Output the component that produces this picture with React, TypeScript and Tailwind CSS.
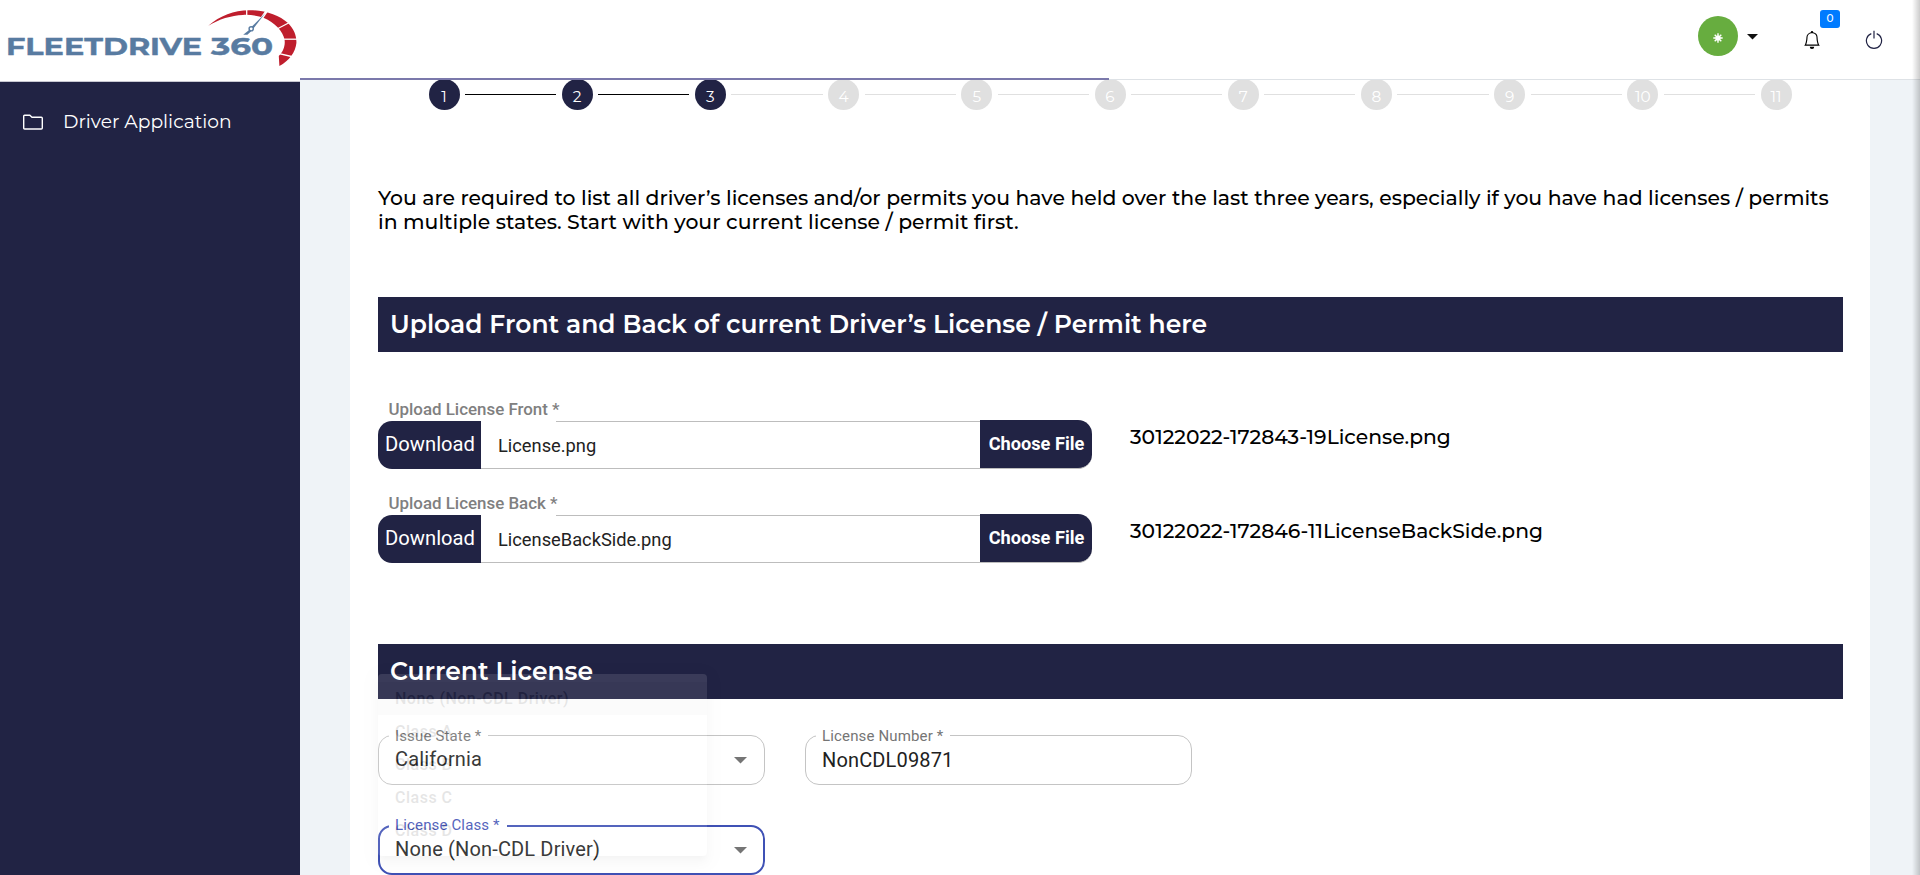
import React from "react";
import { BsBell } from "react-icons/bs";

const STEPS = Array.from({ length: 11 }, (_, i) => i + 1);
const CURRENT_STEP = 3;

function Logo() {
  return (
    <svg width="300" height="81" viewBox="0 0 300 81" className="block">
      <g
        fill="#587ba1"
        stroke="#587ba1"
        strokeWidth="0.4"
        fontFamily="Montserrat, Inter, sans-serif"
        fontWeight="700"
        fontSize="24"
      >
        <text x="6" y="55" textLength="196" lengthAdjust="spacingAndGlyphs">
          FLEETDRIVE
        </text>
        <text x="211" y="55" textLength="62" lengthAdjust="spacingAndGlyphs">
          360
        </text>
      </g>
      <path
        d="M208.3 25.8C220 15.5 234 10.3 249 10.2C264 10 279 15 288 23C294 29 296.7 36 296.4 43C295.6 52 289 61 279.4 66L278.8 56C283 52 285.4 46 284.6 40C283.4 31 274 22.500 264 18C258 15.400 250 14.600 243 14.900C231 15.400 219 19 208.300 25.800Z"
        fill="#bf1e2d"
      />
      <g stroke="#fff" strokeWidth="1.300">
        <path d="M246.700 9V18" />
        <path d="M267 10.500L260.500 20" strokeWidth="2.600" />
        <path d="M289.500 22.500L276 29.500" />
        <path d="M297.500 39.200H281" />
        <path d="M291.500 56.500L276 52.800" />
      </g>
      <path d="M265.200 13.200L253.200 28.800L251.200 27.200Z" fill="#587ba1" />
      <path d="M249.400 29.800L243.200 34.800H247.400L251.200 31.200Z" fill="#587ba1" />
      <circle cx="251.200" cy="28.800" r="2.100" fill="#fff" stroke="#587ba1" strokeWidth="1.400" />
    </svg>
  );
}

function Sidebar() {
  return (
    <aside className="flex w-[300px] shrink-0 flex-col">
      <div className="h-[82px] border-b border-[#c8c8d2] bg-white">
        <Logo />
      </div>
      <nav className="flex-1 bg-[#212344] pt-7">
        <a className="flex h-6 items-center pl-[22px] text-[18.7px] text-white">
          <svg width="22" height="18" viewBox="0 0 22 18" fill="none" stroke="#fff" strokeWidth="1.400">
            <path d="M2.500 2.200H7.800L10 4.200H19.300Q20.300 4.200 20.300 5.200V15Q20.300 16 19.300 16H2.700Q1.700 16 1.700 15V3Q1.700 2.200 2.500 2.200Z" />
          </svg>
          <span className="ml-[19px]">Driver Application</span>
        </a>
      </nav>
    </aside>
  );
}

function Header() {
  return (
    <header className="relative flex h-20 shrink-0 border-b border-[#dee2e6] bg-white pl-[1398px]">
      <div className="mt-4 flex h-10 w-10 items-center justify-center rounded-full bg-[#67ad3f]">
        <svg width="10" height="10" viewBox="-5 -5 10 10" stroke="#fff" strokeWidth="1.400" className="mt-[3px]">
          <path d="M0 -4.700V4.700M-4.700 0H4.700M-3.300 -3.300L3.300 3.300M-3.300 3.300L3.300 -3.300" />
          <circle r="2.600" fill="#fff" stroke="none" />
        </svg>
      </div>
      <svg width="11" height="6" viewBox="0 0 11 6" className="mt-[34px] ml-[9px]">
        <path d="M0 0H11L5.500 5.500Z" fill="#111" />
      </svg>
      <div className="relative mt-[31px] ml-[45px] h-[18px] w-[18px] text-black">
        <BsBell size={18} />
        <span className="absolute -top-[21px] left-[17px] flex h-[18px] w-5 items-center justify-center rounded-[3px] bg-[#007bff] text-[10.5px] font-medium text-white">
          0
        </span>
      </div>
      <svg width="18" height="20" viewBox="0 0 18 20" fill="none" stroke="#212344" strokeWidth="1.200" className="mt-[30px] ml-[44px]">
        <path d="M6.300 3.600A7.600 7.600 0 1 0 11.700 3.600M9 0.800V8.500" />
      </svg>
      <div className="absolute -bottom-px left-0 h-0.5 w-[809px] bg-[#7b79ab]" />
    </header>
  );
}

function Stepper() {
  return (
    <ol className="-mt-px ml-[50.5px] flex w-[1363px] items-center">
      {STEPS.map((n) => (
        <React.Fragment key={n}>
          {n > 1 && (
            <li className={n <= CURRENT_STEP ? "mx-[5.5px] h-px flex-1 bg-black" : "mx-[5.5px] h-px flex-1 bg-[#e0e0e0]"} />
          )}
          <li
            className={
              "flex h-[31px] w-[31px] shrink-0 items-center justify-center rounded-full pt-1.5 text-[15.3px] text-white " +
              (n <= CURRENT_STEP ? "bg-[#212344]" : "bg-[#e0e0e0]")
            }
          >
            {n}
          </li>
        </React.Fragment>
      ))}
    </ol>
  );
}

function SectionTitle({ children }: { children: React.ReactNode }) {
  return (
    <h2 className="flex h-[55px] shrink-0 items-center bg-[#212344] pl-3 text-[25px] font-semibold text-white">
      {children}
    </h2>
  );
}

function UploadRow({ label, file, stored }: { label: string; file: string; stored: string }) {
  return (
    <div className="flex h-[94px]">
      <div className="w-[714px] font-['Roboto',sans-serif]">
        <div className="relative z-10 flex h-[22px] w-fit items-center bg-white pl-[10.5px] text-[16.9px] font-medium text-[#808080]">
          {label}
        </div>
        <div className="flex h-12">
          <div className="flex w-[103px] items-center justify-center rounded-l-[14px] bg-[#212344] pb-0.5 pl-px text-[20.2px] text-white">
            Download
          </div>
          <div className="flex flex-1 items-center border-b border-[#bdbdbd] pl-[17px] text-[18.3px] text-[#222]">
            <span className="relative top-px">{file}</span>
          </div>
          <div className="-mt-px flex w-[112px] items-center justify-center rounded-r-[14px] border-b border-[#bdbdbd] bg-[#212344] pb-px pl-px text-[18.2px] font-bold text-white">
            Choose File
          </div>
        </div>
        <div className="relative -top-12 ml-[178px] h-px w-[424px] bg-[#bdbdbd]" />
      </div>
      <p className="mt-[22px] ml-[38px] text-[20.3px] leading-8 font-medium text-black">{stored}</p>
    </div>
  );
}

function OutlinedField({
  label,
  value,
  select = false,
  focused = false,
}: {
  label: string;
  value: string;
  select?: boolean;
  focused?: boolean;
}) {
  return (
    <div
      className={
        "relative flex h-[50px] w-[387px] items-center justify-between rounded-[14px] font-['Roboto',sans-serif] tracking-[0.00938em] " +
        (focused ? "border-2 border-[#3f51b5] pr-[16px] pl-[15px]" : "border border-[#c4c4c4] pr-[17px] pl-4")
      }
    >
      <span
        className={
          "absolute bg-white pr-[7px] pl-[6px] text-[15px] leading-5 " +
          (focused ? "-top-[12px] left-[9px] text-[#3f51b5]" : "-top-[10px] left-[10px] text-[#757575]")
        }
      >
        {label}
      </span>
      <span className={"text-[20px] leading-6 text-[#212121] " + (select ? "-mt-0.5" : "")}>{value}</span>
      {select && (
        <svg width="13" height="7" viewBox="0 0 13 7" className="relative">
          <path d="M0 0H13L6.500 6.500Z" fill="#757575" />
        </svg>
      )}
    </div>
  );
}

const CLASS_OPTIONS = ["None (Non-CDL Driver)", "Class A", "Class B", "Class C", "Class D"];

function FadingMenu() {
  return (
    <ul className="absolute top-[30px] left-0 z-20 w-[329px] rounded bg-white py-2 font-['Roboto',sans-serif] text-[16px] font-medium tracking-[0.5px] text-[#212121] opacity-[0.11] shadow-[0_5px_5px_-3px_rgba(0,0,0,0.2),0_8px_10px_1px_rgba(0,0,0,0.14),0_3px_14px_2px_rgba(0,0,0,0.12)]">
      {CLASS_OPTIONS.map((option, i) => (
        <li
          key={option}
          className={"flex h-[33.2px] items-center pl-[17px] " + (i === 0 ? "bg-[#e4e4e4]" : "")}
        >
          {option}
        </li>
      ))}
    </ul>
  );
}

export default function App() {
  return (
    <div className="relative flex h-[875px] w-full overflow-hidden bg-[#eff3f7] font-['Montserrat','Inter',sans-serif]">
      <Sidebar />
      <div className="flex min-w-0 flex-1 flex-col">
        <Header />
        <main className="ml-[50px] flex min-h-0 w-[1520px] flex-1 flex-col overflow-hidden bg-white pr-[27px] pl-7">
          <Stepper />
          <p className="mt-[76px] text-[20.4px] leading-6 font-medium text-black">
            You are required to list all driver’s licenses and/or permits you have held over the last three years,
            especially if you have had licenses / permits in multiple states. Start with your current license / permit
            first.
          </p>
          <div className="mt-[63px] flex flex-col">
            <SectionTitle>Upload Front and Back of current Driver’s License / Permit here</SectionTitle>
          </div>
          <div className="mt-[47px]">
            <UploadRow label="Upload License Front *" file="License.png" stored="30122022-172843-19License.png" />
            <UploadRow label="Upload License Back *" file="LicenseBackSide.png" stored="30122022-172846-11LicenseBackSide.png" />
          </div>
          <section className="relative mt-[57px] flex flex-col">
            <SectionTitle>Current License</SectionTitle>
            <div className="mt-9 flex gap-10">
              <OutlinedField label="Issue State *" value="California" select />
              <OutlinedField label="License Number *" value="NonCDL09871" />
            </div>
            <div className="mt-10">
              <OutlinedField label="License Class *" value="None (Non-CDL Driver)" select focused />
            </div>
            <FadingMenu />
          </section>
        </main>
      </div>
      <div className="absolute top-0 right-0 h-full w-2 bg-linear-to-r from-black/0 to-black/20" />
    </div>
  );
}
